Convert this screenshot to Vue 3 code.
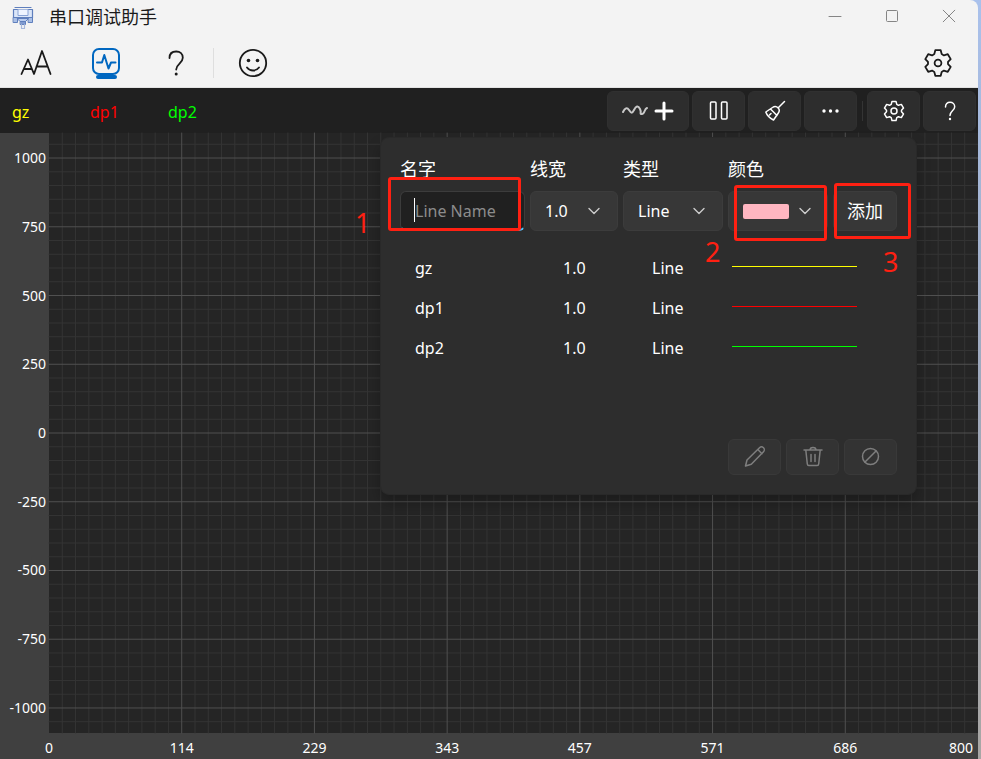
<script setup>
import { ref } from 'vue'

const series = ref([
  { name: 'gz', width: '1.0', type: 'Line', color: '#ffff00' },
  { name: 'dp1', width: '1.0', type: 'Line', color: '#ff0000' },
  { name: 'dp2', width: '1.0', type: 'Line', color: '#00ff00' },
])

const lineName = ref('')
const lineWidth = ref('1.0')
const lineType = ref('Line')
const lineColor = ref('#ffb6c1')

function addLine() {
  if (!lineName.value) return
  series.value.push({
    name: lineName.value,
    width: lineWidth.value,
    type: lineType.value,
    color: lineColor.value,
  })
  lineName.value = ''
}

// Vertical axis spans slightly more than ±1000 so the outer labels fit.
const yHalfRange = 1091
const yPos = (v) => 50 - (v / (yHalfRange * 2)) * 100 + '%'
const yMajor = [1000, 750, 500, 250, 0, -250, -500, -750, -1000]
const yMinor = []
for (let v = -1050; v <= 1050; v += 50) {
  if (v % 250 !== 0) yMinor.push(v)
}

const xMajor = [0, 114, 229, 343, 457, 571, 686, 800]
const xPos = (i) => (i / 7) * 100 + '%'
const xMinor = []
for (let i = 1; i < 70; i++) {
  if (i % 10 !== 0) xMinor.push(i / 10)
}
</script>

<template>
  <div class="window">
    <header class="titlebar">
      <svg class="app-icon" viewBox="0 0 22 24" width="22" height="24" aria-hidden="true">
        <path d="M3 1.500h16M1.500 3.500h19v8h-19z" fill="#dbe6f8" stroke="#5f7fbd" stroke-width="1.200" />
        <path d="M6 3.500v6h10v-6" fill="#eef4ff" stroke="#8aa4d6" />
        <path d="M1.500 11.500h4v5h-4zM16.500 11.500h4v5h-4z" fill="#a9bfe6" stroke="#5f7fbd" />
        <path d="M5.500 12.500h11l-3 3h-5z" fill="#b9ccee" stroke="#5f7fbd" />
        <path d="M8.500 15.500h5v3h-5z" fill="#7f9ad0" stroke="#5f7fbd" />
        <path d="M9.500 18.500v4h3v-4" stroke="#a6b8dc" stroke-width="1.200" />
      </svg>
      <h1>串口调试助手</h1>
      <div class="caption">
        <button type="button" aria-label="最小化">
          <svg viewBox="0 0 14 14" width="14" height="14"><path d="M1 7.500h12" /></svg>
        </button>
        <button type="button" aria-label="最大化">
          <svg viewBox="0 0 14 14" width="14" height="14"><rect x="1.500" y="1.500" width="11" height="11" rx="1" /></svg>
        </button>
        <button type="button" aria-label="关闭">
          <svg viewBox="0 0 14 14" width="14" height="14"><path d="M1.200 1.200l11.600 11.600M12.800 1.200L1.200 12.800" /></svg>
        </button>
      </div>
    </header>

    <nav class="nav">
      <button type="button" aria-label="字体">
        <svg viewBox="0 0 32 32" width="32" height="32">
          <path d="M1.500 27L8 12.500l6 14.500L22 4l8.500 23M4 22h7.500M16.500 19.500h11" />
        </svg>
      </button>
      <button type="button" class="active" aria-label="波形">
        <svg viewBox="0 0 32 34" width="32" height="34">
          <rect x="3" y="3" width="26" height="25" rx="6" />
          <path d="M7 16.500h5L14.300 9l4.200 13.500 2.500-6h4.500" />
          <path class="mark" d="M8 31h17" />
        </svg>
      </button>
      <button type="button" aria-label="帮助">
        <svg viewBox="0 0 32 32" width="32" height="32">
          <path d="M9.500 11C9.500 7 12 4.500 16.200 4.500c4 0 6.600 2.600 6.600 6.200 0 5.600-6.600 6.100-6.600 11.800" />
          <circle class="dot" cx="16.200" cy="27" r="1.500" />
        </svg>
      </button>
      <span class="divider"></span>
      <button type="button" aria-label="反馈">
        <svg viewBox="0 0 32 32" width="32" height="32">
          <circle cx="16" cy="16" r="13.200" />
          <circle class="dot" cx="11.500" cy="13.500" r="1.800" />
          <circle class="dot" cx="20.500" cy="13.500" r="1.800" />
          <path d="M10 20.500c3 4 9 4 12 0" />
        </svg>
      </button>
      <button type="button" class="settings" aria-label="设置">
        <svg viewBox="0 0 32 32" width="32" height="32">
          <path d="M13.300 3.200h5.400l1 3.900 2.200 1.300 3.900-1.200 2.900 4.900-2.700 2.800v2.200l2.700 2.800-2.900 4.900-3.900-1.200-2.200 1.300-1 3.900h-5.400l-1-3.900-2.200-1.300-3.900 1.200-2.900-4.900L6 17.100v-2.200l-2.700-2.800 2.900-4.900 3.900 1.200 2.200-1.300z" />
          <circle cx="16" cy="16" r="3.400" />
        </svg>
      </button>
    </nav>

    <main class="scope">
      <div class="toolbar">
        <ul class="legend">
          <li v-for="s in series" :key="s.name" :style="{ color: s.color }">{{ s.name }}</li>
        </ul>
        <div class="tools">
          <button type="button" class="wide" aria-label="添加曲线">
            <svg viewBox="0 0 54 22" width="54" height="22">
              <path class="wave" d="M2 12c2-4 4-5 6-2s3 4 5 0 4-5 6-1-1 5 2 5 2-5 5-6" />
              <path class="plus" d="M35 11h16M43 3v16" />
            </svg>
          </button>
          <button type="button" aria-label="暂停">
            <svg viewBox="0 0 22 22" width="22" height="22">
              <rect x="2.500" y="2" width="5.500" height="17" rx="1" />
              <rect x="13.500" y="2" width="5.500" height="17" rx="1" />
            </svg>
          </button>
          <button type="button" aria-label="清除">
            <svg viewBox="0 0 22 22" width="22" height="22">
              <path d="M20.500 1.500l-6.500 6.500M8.500 7.500c2-1.500 4-1.300 5.500.2s1.700 3.500.2 5.500L9.500 20C6.500 18.500 3 15.500 1.800 12zM6.500 9l6.500 6.500M5.500 15l1.500-1.500" />
            </svg>
          </button>
          <button type="button" aria-label="更多">
            <svg viewBox="0 0 22 22" width="22" height="22">
              <circle class="dot" cx="4" cy="11" r="1.700" />
              <circle class="dot" cx="10.500" cy="11" r="1.700" />
              <circle class="dot" cx="17" cy="11" r="1.700" />
            </svg>
          </button>
          <span class="split"></span>
          <button type="button" aria-label="图表设置">
            <svg viewBox="0 0 32 32" width="24" height="24">
              <g stroke-width="2">
                <path d="M13.300 3.200h5.400l1 3.900 2.200 1.300 3.900-1.200 2.900 4.900-2.700 2.800v2.200l2.700 2.800-2.900 4.900-3.900-1.200-2.200 1.300-1 3.900h-5.400l-1-3.900-2.200-1.300-3.900 1.200-2.900-4.900L6 17.100v-2.200l-2.700-2.800 2.900-4.900 3.900 1.200 2.200-1.300z" />
                <circle cx="16" cy="16" r="4" />
              </g>
            </svg>
          </button>
          <button type="button" aria-label="图表帮助">
            <svg viewBox="0 0 22 22" width="22" height="22">
              <path d="M6.500 7C6.500 4 8.300 2.300 11 2.300s4.700 1.800 4.700 4.400c0 4-4.700 4.300-4.700 8.800" />
              <circle class="dot" cx="11" cy="19" r="1.200" />
            </svg>
          </button>
        </div>
      </div>

      <div class="chart">
        <svg class="plot">
          <rect class="area" width="100%" height="100%" />
          <line v-for="v in yMinor" :key="'yn' + v" class="minor" x1="0" x2="100%" :y1="yPos(v)" :y2="yPos(v)" />
          <line v-for="i in xMinor" :key="'xn' + i" class="minor" y1="0" y2="100%" :x1="xPos(i)" :x2="xPos(i)" />
          <line v-for="v in yMajor" :key="'yj' + v" class="major" x1="0" x2="100%" :y1="yPos(v)" :y2="yPos(v)" />
          <line v-for="i in 6" :key="'xj' + i" class="major" y1="0" y2="100%" :x1="xPos(i)" :x2="xPos(i)" />
          <text v-for="v in yMajor" :key="'yt' + v" x="-3" :y="yPos(v)" dy="5" text-anchor="end">{{ v }}</text>
          <text
            v-for="(v, i) in xMajor"
            :key="'xt' + v"
            :x="xPos(i)"
            y="100%"
            :dx="i === 7 ? -5 : 0"
            dy="20"
            :text-anchor="i === 7 ? 'end' : 'middle'"
          >{{ v }}</text>
        </svg>
      </div>

      <section class="panel">
        <form class="editor" @submit.prevent="addLine">
          <label for="line-name">名字</label>
          <label for="line-width">线宽</label>
          <label for="line-type">类型</label>
          <label for="line-color">颜色</label>
          <span></span>
          <div class="field name">
            <input id="line-name" v-model="lineName" type="text" placeholder="Line Name" />
            <span class="caret"></span>
          </div>
          <div class="field">
            <select id="line-width" v-model="lineWidth">
              <option>1.0</option>
            </select>
            <svg class="chevron" viewBox="0 0 12 12" width="12" height="12"><path d="M1 3.500l5 5 5-5" /></svg>
          </div>
          <div class="field">
            <select id="line-type" v-model="lineType">
              <option>Line</option>
            </select>
            <svg class="chevron" viewBox="0 0 12 12" width="12" height="12"><path d="M1 3.500l5 5 5-5" /></svg>
          </div>
          <button id="line-color" type="button" class="color" aria-haspopup="listbox">
            <span class="swatch" :style="{ background: lineColor }"></span>
            <svg viewBox="0 0 12 12" width="12" height="12"><path d="M1 3.500l5 5 5-5" /></svg>
          </button>
          <button type="submit">添加</button>
        </form>

        <table class="lines">
          <tbody>
            <tr v-for="s in series" :key="s.name">
              <td class="c-name">{{ s.name }}</td>
              <td class="c-width">{{ s.width }}</td>
              <td class="c-type">{{ s.type }}</td>
              <td class="c-sample"><span :style="{ background: s.color }"></span></td>
            </tr>
          </tbody>
        </table>

        <footer class="actions">
          <button type="button" aria-label="编辑" disabled>
            <svg viewBox="0 0 22 22" width="22" height="22">
              <path d="M1.500 20l1.500-6L15.500 1.800c1.200-1.200 3-1 4 0s1.200 2.800 0 4L7.300 18.300zM13.800 3.500l4.200 4.200" />
            </svg>
          </button>
          <button type="button" aria-label="删除" disabled>
            <svg viewBox="0 0 22 22" width="22" height="22">
              <path d="M2 4h18M8 4c0-3.500 6-3.500 6 0M3.800 4l1.500 14c.1 1 .7 1.500 1.500 1.500h8.400c.8 0 1.400-.500 1.500-1.500l1.500-14M9 8.500v7M13 8.500v7" />
            </svg>
          </button>
          <button type="button" aria-label="清空" disabled>
            <svg viewBox="0 0 22 22" width="22" height="22">
              <circle cx="10.500" cy="10.500" r="8" /><path d="M5 16l11-11" />
            </svg>
          </button>
        </footer>

        <div class="frame frame-1"></div>
        <div class="frame frame-2"></div>
        <div class="frame frame-3"></div>
        <span class="step step-1">1</span>
        <span class="step step-2">2</span>
        <span class="step step-3">3</span>
      </section>
    </main>
  </div>
</template>

<style>
body {
  background: linear-gradient(#a9c1ec, #9fa9bd 50%, #a8a6a4);
}
</style>

<style scoped>
.window {
  display: flex;
  flex-direction: column;
  min-height: 100vh;
  margin-right: 3px;
  border-radius: 0 8px 0 0;
  overflow: hidden;
  background: #f3f3f3;
  color: #fff;
  font: 16px/24px "Noto Sans", "Noto Sans CJK SC", sans-serif;
}
* {
  box-sizing: border-box;
}
button {
  display: flex;
  align-items: center;
  justify-content: center;
  margin: 0;
  padding: 0;
  border: 0;
  background: none;
  color: inherit;
  font: inherit;
}
svg {
  display: block;
  fill: none;
  stroke: currentColor;
  stroke-linecap: round;
  stroke-linejoin: round;
}
.dot {
  fill: currentColor;
  stroke: none;
}

.titlebar {
  display: flex;
  align-items: flex-start;
  height: 36px;
  padding: 0 1px 0 12px;
  color: #1a1a1a;
}
.app-icon {
  margin-top: 6px;
}
.titlebar h1 {
  flex: 1;
  margin: 4px 0 0 15px;
  font-size: 18px;
  font-weight: 400;
  font-family: "Noto Sans CJK SC", sans-serif;
}
.caption {
  display: flex;
  color: #858585;
}
.caption button {
  width: 57px;
  height: 32px;
}

.nav {
  display: flex;
  align-items: center;
  height: 52px;
  padding: 2px 0 0 1px;
  border-bottom: 1px solid #e2e2e2;
  color: #1a1a1a;
}
.nav button {
  width: 70px;
  height: 48px;
}
.nav svg {
  stroke-width: 1.8;
}
.nav .active {
  color: #0067c0;
}
.nav .active svg {
  stroke-width: 2;
}
.nav .mark {
  stroke-width: 4;
}
.divider {
  width: 1px;
  height: 30px;
  margin: 0 4px 0 2px;
  background: #dedede;
}
.nav .settings {
  margin-left: auto;
  margin-right: 5px;
}

.scope {
  position: relative;
  display: flex;
  flex: 1;
  flex-direction: column;
  background: #404040;
}
.toolbar {
  display: flex;
  align-items: center;
  justify-content: space-between;
  height: 45px;
  padding: 0 2px 0 12px;
  background: #202020;
}
.legend {
  display: flex;
  margin: 0;
  padding: 3px 0 0;
  list-style: none;
}
.legend li {
  width: 78px;
}
.tools {
  display: flex;
  align-items: center;
  gap: 3px;
}
.tools button {
  width: 53px;
  height: 40px;
  border: 1px solid #303030;
  border-radius: 6px;
  background: #2d2d2d;
}
.tools .wide {
  width: 82px;
}
.tools svg {
  stroke-width: 1.5;
}
.tools .wave {
  stroke: #c8c8c8;
  stroke-width: 2;
}
.tools .plus {
  stroke-width: 3;
}
.split {
  width: 1px;
  height: 20px;
  margin: 0 1px 0 2px;
  background: #343434;
}

.chart {
  display: flex;
  flex: 1;
  padding: 0 0 26px 49px;
}
.plot {
  flex: 1;
  width: 100%;
  overflow: visible;
}
.area {
  fill: #252525;
  stroke: none;
}
.minor {
  stroke: #343434;
}
.major {
  stroke: #505050;
}
.plot text {
  fill: #fff;
  stroke: none;
  font-size: 14px;
}

.panel {
  position: absolute;
  top: 49px;
  right: 61px;
  width: 537px;
  padding: 19px;
  border: 1px solid #292929;
  border-radius: 9px;
  background: #2d2d2d;
  box-shadow: 0 8px 14px rgba(0, 0, 0, 0.25);
}
.editor {
  display: grid;
  grid-template-columns: 125px 88px 100px 100px 64px;
  gap: 10px 5px;
}
.editor label {
  font-size: 18px;
}
.field {
  position: relative;
}
input,
select,
.editor button,
.actions button {
  width: 100%;
  height: 40px;
  margin: 0;
  border: 1px solid #3c3c3c;
  border-radius: 6px;
  background: #373737;
  color: #fff;
  font: inherit;
}
input {
  padding: 0 14px;
  border-bottom: 2px solid #4cc2ff;
  background: #202020;
}
input::placeholder {
  color: #8c8c8c;
  opacity: 1;
}
.caret {
  position: absolute;
  top: 7px;
  left: 14px;
  width: 1px;
  height: 24px;
  background: #fff;
}
select {
  padding: 0 14px;
  appearance: none;
}
.chevron {
  position: absolute;
  top: 14px;
  right: 18px;
  pointer-events: none;
}
.chevron,
.color svg {
  color: #ccc;
  stroke-width: 1.4;
}
.editor .color {
  justify-content: space-between;
  padding: 0 16px 0 14px;
}
.swatch {
  width: 46px;
  height: 15px;
  border-radius: 2px;
}
.editor button {
  font-size: 18px;
}

.lines {
  width: 100%;
  margin-top: 17px;
  border-spacing: 0;
  table-layout: fixed;
}
.lines td {
  height: 40px;
  padding: 0;
}
.lines .c-name {
  width: 130px;
  padding-left: 15px;
}
.lines .c-width {
  width: 93px;
  padding-left: 33px;
}
.lines .c-type {
  width: 105px;
  padding-left: 29px;
}
.lines .c-sample {
  padding: 0 0 4px 4px;
}
.c-sample span {
  display: block;
  width: 125px;
  height: 1px;
}

.actions {
  display: flex;
  justify-content: flex-end;
  gap: 5px;
  margin-top: 71px;
}
.actions button {
  width: 53px;
  height: 36px;
  background: #333;
  border-color: #393939;
  color: #7e7e7e;
}
.actions svg {
  stroke-width: 1.5;
}

.frame {
  position: absolute;
  border: 3px solid #ff2012;
  border-radius: 3px;
}
.frame-1 {
  top: 39px;
  left: 7px;
  width: 133px;
  height: 54px;
}
.frame-2 {
  top: 47px;
  left: 353px;
  width: 93px;
  height: 56px;
}
.frame-3 {
  top: 45px;
  left: 453px;
  width: 77px;
  height: 56px;
}
.step {
  position: absolute;
  color: #ff2012;
  font-size: 27px;
  line-height: 32px;
}
.step-1 {
  top: 69px;
  left: -26px;
}
.step-2 {
  top: 98px;
  left: 324px;
}
.step-3 {
  top: 108px;
  left: 502px;
}
</style>
